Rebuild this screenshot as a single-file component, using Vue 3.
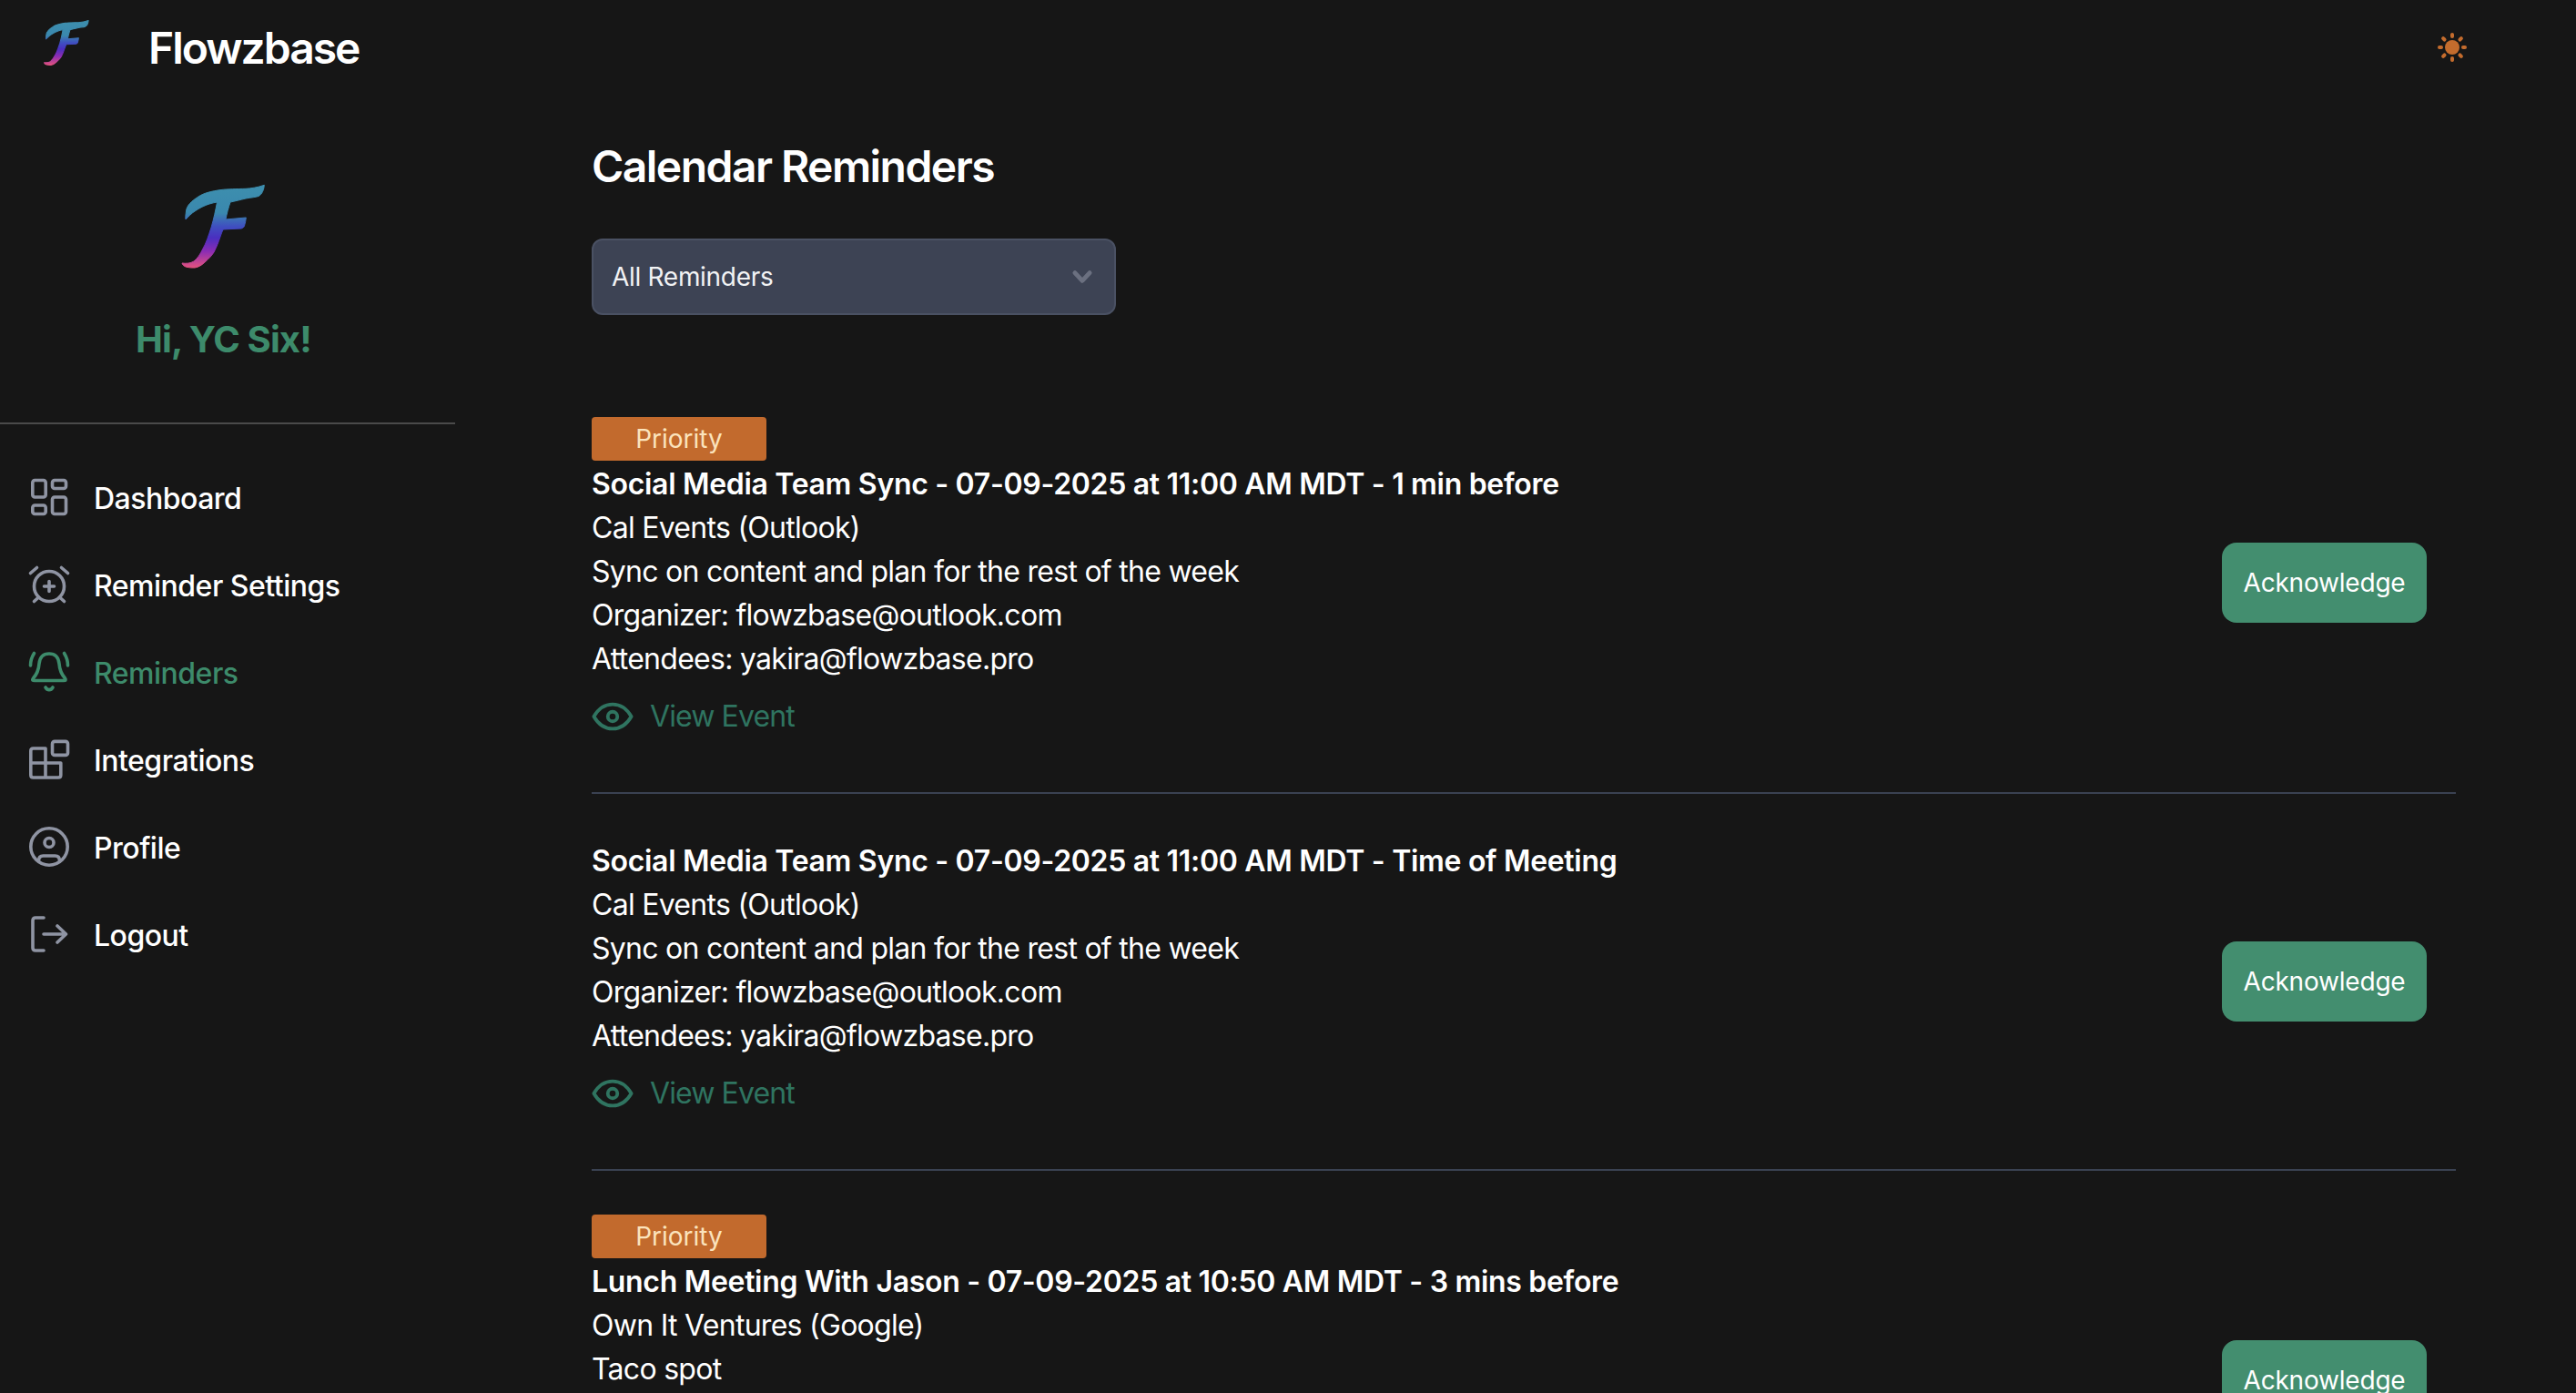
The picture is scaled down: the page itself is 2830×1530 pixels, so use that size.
<script setup>
const reminders = [
  {
    priority: true,
    title: 'Social Media Team Sync - 07-09-2025 at 11:00 AM MDT - 1 min before',
    lines: ['Cal Events (Outlook)', 'Sync on content and plan for the rest of the week', 'Organizer: flowzbase@outlook.com', 'Attendees: yakira@flowzbase.pro'],
    view: true,
  },
  {
    priority: false,
    title: 'Social Media Team Sync - 07-09-2025 at 11:00 AM MDT - Time of Meeting',
    lines: ['Cal Events (Outlook)', 'Sync on content and plan for the rest of the week', 'Organizer: flowzbase@outlook.com', 'Attendees: yakira@flowzbase.pro'],
    view: true,
  },
  {
    priority: true,
    title: 'Lunch Meeting With Jason - 07-09-2025 at 10:50 AM MDT - 3 mins before',
    lines: ['Own It Ventures (Google)', 'Taco spot'],
    view: false,
  },
]
const nav = [
  { label: 'Dashboard', icon: 'dashboard' },
  { label: 'Reminder Settings', icon: 'alarm' },
  { label: 'Reminders', icon: 'bell', active: true },
  { label: 'Integrations', icon: 'apps' },
  { label: 'Profile', icon: 'profile' },
  { label: 'Logout', icon: 'logout' },
]
const logoPath = 'M120.3 23.3 C113 26 105 27 100 27.3 C90 27.6 80 27.6 73 28.5 C62 30 54 32 48 36 C40 41 35 46 34.5 52 C34 56 33.5 59 34 61 C37 58 40 54.5 44 52 C49 48.5 55 45.5 60 44 C63 43 66 42.5 68.5 42 C67 50 65 60 62 70 C59 79 56.5 87 53 93 C50 99 47 104 43 107 C39 109.5 34 109.5 30 109 C30.5 111 32 112.5 35 113.3 C38 114 41 114.2 44 114 C48 113.5 52 111 55 108 C59 104.5 62.5 101 65 97 C68 91 70 86 72 80 C73 77 74 74.5 75 72 L95 71 C97 70.5 98 69.5 98.5 68 C99.5 65 100 62 100.3 59 L78 61 C79 55 81 48 83 42 C88 41 94 39.5 100 38 C106 37 111 36.5 114 35.5 C118 33.5 120 28 120.3 23.3 Z'
const rays = [0, 45, 90, 135, 180, 225, 270, 315]
</script>

<template>
  <div class="page">
    <header class="topbar">
      <svg class="logo-small" viewBox="0 0 140 130">
        <defs>
          <linearGradient id="logoGrad" x1="0" y1="23" x2="0" y2="114" gradientUnits="userSpaceOnUse">
            <stop offset="0" stop-color="#3d8fae" />
            <stop offset="0.34" stop-color="#3a88ae" />
            <stop offset="0.5" stop-color="#3f50c0" />
            <stop offset="0.64" stop-color="#4a2fc0" />
            <stop offset="0.8" stop-color="#8a2cb4" />
            <stop offset="1" stop-color="#e2527f" />
          </linearGradient>
        </defs>
        <path :d="logoPath" fill="url(#logoGrad)" stroke="url(#logoGrad)" stroke-width="2" stroke-linejoin="round" />
      </svg>
      <span class="brand">Flowzbase</span>
      <svg class="sun" viewBox="0 0 40 40">
        <circle cx="20" cy="20" r="8" fill="#c46c2d" />
        <rect v-for="r in rays" :key="r" x="18" y="4" width="4" height="6" rx="2" fill="#c46c2d" :transform="`rotate(${r} 20 20)`" />
      </svg>
    </header>

    <div class="body">
      <aside class="sidebar">
        <svg class="logo-big" viewBox="0 0 140 130">
          <path :d="logoPath" fill="url(#logoGrad)" stroke="url(#logoGrad)" stroke-width="1" stroke-linejoin="round" />
        </svg>
        <div class="greeting">Hi, YC Six!</div>
        <div class="side-rule"></div>
        <nav class="nav">
          <a v-for="item in nav" :key="item.label" class="nav-row" :class="{ active: item.active }">
            <svg class="nav-icon" viewBox="0 0 48 48" fill="none" stroke="currentColor" stroke-width="3.6" stroke-linecap="round" stroke-linejoin="round">
              <template v-if="item.icon === 'dashboard'">
                <rect x="5.8" y="5.5" width="14.4" height="18.5" rx="2.5" />
                <rect x="27.5" y="5.5" width="15" height="9" rx="2.5" />
                <rect x="5.8" y="33" width="14.4" height="9.5" rx="2.5" />
                <rect x="27.5" y="24" width="15" height="18.5" rx="2.5" />
              </template>
              <template v-else-if="item.icon === 'alarm'">
                <circle cx="24" cy="26" r="16.5" />
                <path d="M24 20.5v11M18.5 26h11" />
                <path d="M3.5 11.5 10.5 5.5M44.5 11.5 37.5 5.5M7.5 42.5 12.5 38M40.5 42.5 35.5 38" />
              </template>
              <template v-else-if="item.icon === 'bell'">
                <path d="M24 4C16 4 13.5 10 13 15C12.5 22 11 26 6.5 31C5 33 6 33.5 8 33.5H40C42 33.5 43 33 41.5 31C37 26 35.5 22 35 15C34.5 10 32 4 24 4Z" />
                <path d="M20 41C22 44.5 26 44.5 28 41" />
                <path d="M7.5 3.5C5 7.5 3.5 12 3.5 17M40.500 3.500C43 7.500 44.500 12 44.500 17" />
              </template>
              <template v-else-if="item.icon === 'apps'">
                <path d="M20 12H6.500Q3.800 12 3.800 14.700V41.300Q3.800 44 6.500 44H34.100Q36.800 44 36.800 41.300V28H3.800M20 12V44" />
                <rect x="27.500" y="4.400" width="17" height="15" rx="2.500" />
              </template>
              <template v-else-if="item.icon === 'profile'">
                <circle cx="24" cy="24" r="20.200" />
                <circle cx="24" cy="19.500" r="5" />
                <path d="M12.500 39.500C12.500 36 14.500 34 17.500 34H30.500C33.500 34 35.500 36 35.500 39.500" />
              </template>
              <template v-else>
                <path d="M18 6H9Q6 6 6 9V39Q6 42 9 42H18" />
                <path d="M18 24H42.500M33 15L42.500 24L33 33" />
              </template>
            </svg>
            <span class="nav-label">{{ item.label }}</span>
          </a>
        </nav>
      </aside>

      <main class="main">
        <h1 class="heading">Calendar Reminders</h1>
        <div class="select">
          <span>All Reminders</span>
          <svg class="chevron" viewBox="0 0 24 24" fill="none" stroke="#6b7080" stroke-width="4.500" stroke-linecap="round" stroke-linejoin="round">
            <path d="M4.500 8 12 16 19.500 8" />
          </svg>
        </div>
        <section class="list">
          <article v-for="r in reminders" :key="r.title" class="item" :class="{ clipped: !r.view }">
            <div class="info">
              <div v-if="r.priority" class="badge">Priority</div>
              <div class="title">{{ r.title }}</div>
              <div v-for="l in r.lines" :key="l" class="line">{{ l }}</div>
              <div v-if="r.view" class="view">
                <svg class="eye" viewBox="0 0 48 32" fill="none" stroke="currentColor" stroke-width="4" stroke-linejoin="round">
                  <path d="M2.500 16C8 6.500 15 2 24 2C33 2 40 6.500 45.500 16C40 25.500 33 30 24 30C15 30 8 25.500 2.500 16Z" />
                  <circle cx="24" cy="16" r="5.500" />
                </svg>
                <span class="view-label">View Event</span>
              </div>
            </div>
            <button class="ack">Acknowledge</button>
          </article>
        </section>
      </main>
    </div>
  </div>
</template>

<style>
html, body { margin: 0; background: #161616; overflow: hidden; }
</style>

<style scoped>
.page {
  width: 2830px;
  height: 1530px;
  overflow: hidden;
  background: #161616;
  color: #fff;
  font-family: Inter, "Liberation Sans", sans-serif;
  font-size: 32px;
  line-height: 48px;
}
.topbar {
  height: 106px;
  display: flex;
  align-items: center;
  padding: 0 116px 0 32px;
}
.logo-small {
  width: 76px;
  height: 70px;
  align-self: flex-start;
  margin-top: 10px;
}
.brand {
  margin-left: 55px;
  font-size: 48px;
  line-height: 72px;
  font-weight: 600;
  letter-spacing: -2px;
}
.sun {
  width: 40px;
  height: 40px;
  margin-left: auto;
  margin-top: -2px;
}
.body { display: flex; }
.sidebar {
  width: 500px;
  flex: none;
  display: flex;
  flex-direction: column;
}
.logo-big {
  width: 140px;
  height: 130px;
  margin: 74px 0 0 170px;
}
.greeting {
  margin-top: 33px;
  padding-left: 149px;
  font-size: 40px;
  line-height: 60px;
  font-weight: 700;
  letter-spacing: -0.9px;
  color: #3d8b6b;
}
.side-rule {
  height: 2px;
  margin-top: 61px;
  background: #4a4a4a;
}
.nav {
  margin-top: 32px;
  padding-left: 30px;
}
.nav-row {
  height: 96px;
  display: flex;
  align-items: center;
  gap: 25px;
  font-weight: 500;
  letter-spacing: -0.5px;
  color: #fff;
}
.nav-label { margin-top: 4px; }
.nav-icon {
  width: 48px;
  height: 48px;
  color: #8f94a3;
}
.nav-row.active, .nav-row.active .nav-icon { color: #3d8b6b; }
.main {
  flex: 1;
  min-width: 0;
  padding: 41px 132px 0 150px;
}
.heading {
  margin: 0;
  font-size: 48px;
  line-height: 72px;
  font-weight: 600;
  letter-spacing: -1.55px;
}
.select {
  box-sizing: border-box;
  width: 576px;
  height: 84px;
  margin-top: 43px;
  padding: 0 22px 0 20px;
  display: flex;
  align-items: center;
  justify-content: space-between;
  background: #3d4354;
  border: 2px solid #4a5163;
  border-radius: 12px;
  font-size: 28px;
  letter-spacing: -0.3px;
  color: #f1f2f4;
}
.chevron { width: 26px; height: 26px; }
.list { margin-top: 112px; }
.item {
  display: flex;
  align-items: center;
  justify-content: space-between;
  padding-bottom: 48px;
  margin-bottom: 48px;
  border-bottom: 2px solid #3a4252;
}
.item.clipped { min-height: 364px; }
.item.clipped .info { align-self: flex-start; }
.badge {
  width: 192px;
  height: 48px;
  border-radius: 4px;
  background: #c26a2d;
  color: #fbe3bc;
  font-size: 28px;
  line-height: 48px;
  text-align: center;
}
.title, .line {
  box-sizing: border-box;
  height: 48px;
  padding-top: 2px;
}
.title { font-weight: 600; letter-spacing: -0.31px; }
.line { letter-spacing: -0.72px; }
.view {
  height: 48px;
  padding: 17px 0 11px;
  display: flex;
  align-items: center;
  gap: 18px;
  color: #2f7460;
}
.view-label { letter-spacing: -0.9px; }
.eye { width: 46px; height: 32px; }
.ack {
  width: 225px;
  height: 88px;
  margin-right: 32px;
  padding: 0;
  border: none;
  border-radius: 16px;
  background: #438e6f;
  color: #fff;
  font-family: inherit;
  font-size: 28px;
  font-weight: 400;
  letter-spacing: -0.2px;
}
</style>
